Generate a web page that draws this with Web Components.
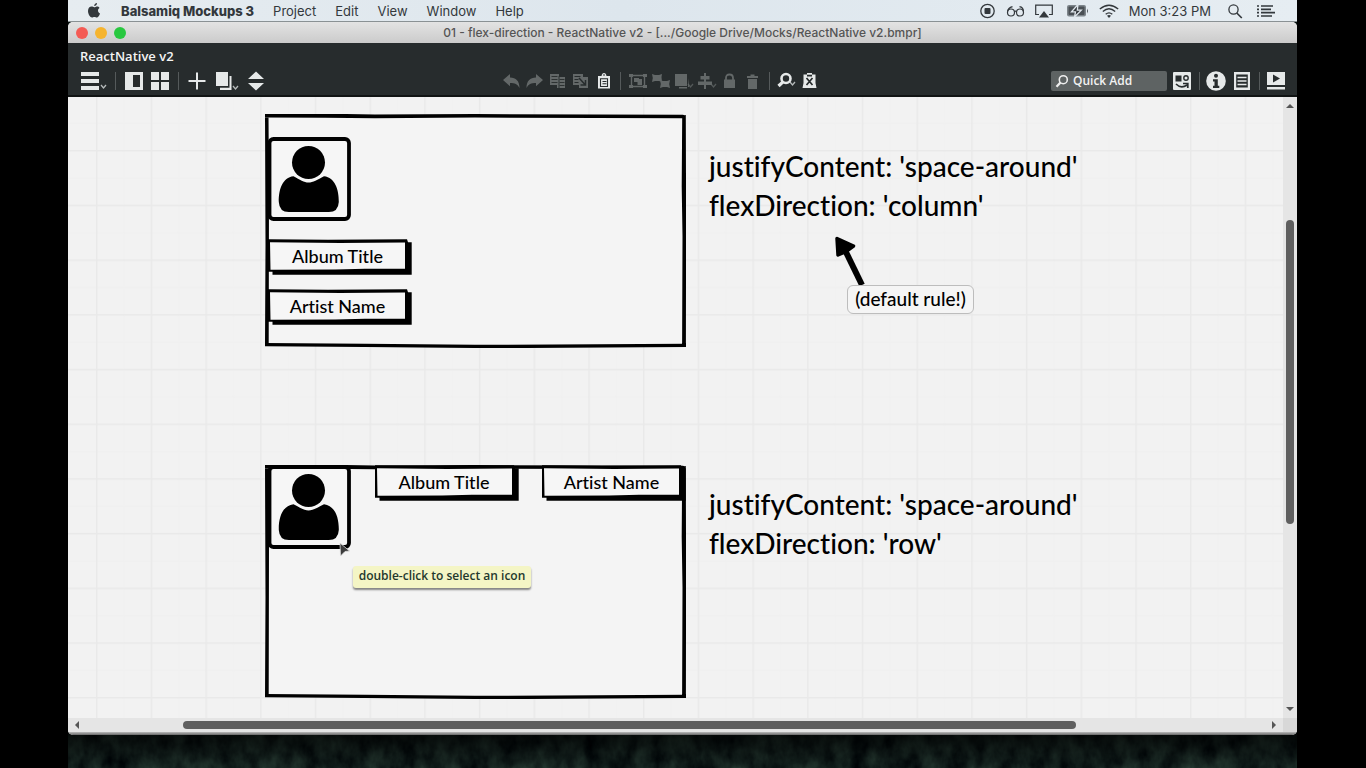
<!DOCTYPE html>
<html lang="en">
<head>
<meta charset="utf-8">
<title>Balsamiq Mockups 3</title>
<style>
html, body { height: 100%; margin: 0; background: #000; }
body { font-family: Inter, "Liberation Sans", sans-serif; }
</style>
</head>
<body>
<mac-desktop>
  <mac-menubar slot="menubar"></mac-menubar>
  <mac-window heading="01 - flex-direction - ReactNative v2 - [.../Google Drive/Mocks/ReactNative v2.bmpr]">
    <mockup-toolbar slot="toolbar" project="ReactNative v2"></mockup-toolbar>
    <mockup-canvas>
      <sketch-frame direction="column" style="left:197px;top:17px">
        <sketch-avatar></sketch-avatar>
        <sketch-button>Album Title</sketch-button>
        <sketch-button>Artist Name</sketch-button>
      </sketch-frame>
      <sketch-text style="left:641px;top:50px">justifyContent: 'space-around'<br>flexDirection: 'column'</sketch-text>
      <sketch-arrow style="left:764px;top:137px"></sketch-arrow>
      <sketch-note style="left:779px;top:188px">(default rule!)</sketch-note>
      <sketch-frame direction="row" style="left:197px;top:368px">
        <sketch-avatar></sketch-avatar>
        <sketch-button>Album Title</sketch-button>
        <sketch-button>Artist Name</sketch-button>
      </sketch-frame>
      <sketch-text style="left:641px;top:388px">justifyContent: 'space-around'<br>flexDirection: 'row'</sketch-text>
      <mockup-tooltip style="left:285px;top:469px">double-click to select an icon</mockup-tooltip>
      <mockup-cursor style="left:271px;top:446px"></mockup-cursor>
    </mockup-canvas>
  </mac-window>
</mac-desktop>

<script>
const define = (name, html, setup) => {
  const template = document.createElement('template');
  template.innerHTML = html;
  customElements.define(name, class extends HTMLElement {
    connectedCallback() {
      if (this.shadowRoot) return;
      this.attachShadow({ mode: 'open' }).append(template.content.cloneNode(true));
      if (setup) setup(this, this.shadowRoot);
    }
  });
};

const chevron = (x, y) => `<path d="M${x} ${y}l2.5 3 2.5-3" fill="none" stroke="currentColor" stroke-width="1.3" opacity=".75"/>`;
const bg = '#272c2d';
const icons = {
  apple: [16, 16, `<path fill="currentColor" d="M11 0c.1 1.600-1.300 3.100-2.800 3.100C8 1.600 9.500.1 11 0zM13.500 4.900c-1 .6-1.600 1.500-1.500 2.700 0 1.400.8 2.400 2 2.900-.6 1.900-1.900 4-3.200 4-.9 0-1.300-.6-2.400-.6s-1.500.6-2.400.6C4.200 14.500 2 11 2 8c0-2.900 1.800-4.400 3.500-4.400 1.100 0 2 .7 2.800.7.700 0 1.700-.8 3-.8.7 0 1.700.4 2.200 1.400z"/>`],
  record: [16, 16, `<circle cx="7.500" cy="8" r="6.700" fill="none" stroke="currentColor" stroke-width="1.300"/><rect x="4.500" y="5" width="6" height="6" rx="1" fill="currentColor"/>`],
  glasses: [19, 16, `<g fill="none" stroke="currentColor" stroke-width="1.200"><circle cx="5" cy="9.500" r="3.500"/><circle cx="14" cy="9.500" r="3.500"/><path d="M8.400 8.500q1.100-.8 2.200 0M1.600 8.500C2 5 4 4.300 6.500 3.600M17.400 8.500c0-3-1.400-4.500-3.900-4.900"/></g>`],
  airplay: [20, 16, `<path d="M4 11.500H.7V2.200h16.600v9.300H14" fill="none" stroke="currentColor" stroke-width="1.200"/><path d="M9 8l5 6.500H4z" fill="currentColor"/>`],
  battery: [24, 16, `<rect x="2" y="2" width="19" height="11.500" rx="2" fill="#7d858b"/><rect x="3.500" y="3.500" width="16" height="8.500" rx="1" fill="#4a5055"/><path d="M22 5.500v5q1.800-2.500 0-5z" fill="currentColor"/><path d="M13 1.500L6.500 8.800h4L9.500 14l6.800-6.900h-4z" fill="currentColor" stroke="#dfe6ec" stroke-width="1.300"/>`],
  wifi: [20, 16, `<g fill="none" stroke="currentColor" stroke-width="1.300"><path d="M.8 6Q10-1.500 19.200 6M3.800 8.500Q10 3 16.200 8.500M6.700 11.200q3.300-2.800 6.600 0"/></g><path d="M10 15l-2-2.300q2-1.500 4 0z" fill="currentColor"/>`],
  spotlight: [24, 16, `<circle cx="12.500" cy="6.500" r="4.600" fill="none" stroke="currentColor" stroke-width="1.300"/><path d="M15.800 10l5 5" stroke="currentColor" stroke-width="1.700"/>`],
  list: [20, 16, `<path d="M6 3h12M6 6.300h10M6 9.600h14M6 13h11" stroke="currentColor" stroke-width="1.700"/><path d="M2 3h2M2 6.300h2M2 9.600h2M2 13h2" stroke="currentColor" stroke-width="1.700"/>`],
  menu: [28, 20, `<path d="M0 1h18v4H0zM0 8h18v4H0zM0 15h18v4H0z" fill="currentColor"/>${chevron(20, 14)}`],
  panel: [20, 20, `<path d="M1 1h18v18H1z" fill="currentColor"/><path d="M9 4h7v12H9z" fill="${bg}"/>`],
  tiles: [20, 20, `<path d="M1 1h8v8H1zM11 1h8v8h-8zM1 11h8v8H1zM11 11h8v8h-8z" fill="currentColor"/>`],
  plus: [20, 20, `<path d="M1.500 10h17M10 1.500v17" stroke="currentColor" stroke-width="2"/>`],
  pages: [28, 20, `<path d="M5 1h12v14H5zM18.500 5h2v14H9v-2.200h9.500z" fill="currentColor"/>${chevron(22, 15)}`],
  sort: [20, 20, `<path d="M11 .5l8 7.500H3zM11 19.500L3 12h16z" fill="currentColor"/>`],
  undo: [18, 18, `<path d="M0 8l7-6v3.500c6 0 9.500 3.500 9.500 10.500-2-4-4.500-5-9.500-5v3.200z" fill="currentColor"/>`],
  redo: [18, 18, `<path d="M17 8l-7-6v3.500C4 5.500.5 9 .5 16c2-4 4.500-5 9.500-5v3.200z" fill="currentColor"/>`],
  copy: [18, 18, `<path d="M1 2h9v11H1zM9 5h7v11H8v-3h1z" fill="currentColor"/><path d="M2.500 4.500h6M2.500 7.500h6M2.500 10.500h6M10.500 7.500h5M10.500 10.500h5M10.500 13.500h5M10 4v12" stroke="${bg}" stroke-width=".9"/>`],
  duplicate: [18, 18, `<path d="M1 2h10v3h5v11H7v-3H1z" fill="currentColor"/><path d="M2.500 4.500h6M2.500 7.500h4M2.500 10.500h4" stroke="${bg}"/><path d="M7 6l6 6.500M13.500 8v5H8.500" stroke="${bg}" stroke-width="1.500" fill="none"/>`],
  paste: [18, 18, `<path d="M3 4h3.500q.5-3 2.500-3t2.500 3H15v12.500H3z" fill="currentColor"/><path d="M5.500 6.800h7v7.700h-7z" fill="none" stroke="${bg}" stroke-width="1.100"/><path d="M8 3h2M7.500 9.500h4M7.500 11.800h4" stroke="${bg}" stroke-width="1.100"/>`],
  group: [18, 18, `<path d="M2.500 3.500h13v11h-13z" fill="none" stroke="currentColor" stroke-width="1.400"/><path d="M0 2h4v3H0zM14 2h4v3h-4zM0 13h4v3H0zM14 13h4v3h-4zM5 6h5v4H5zM8.500 7H13v6H8.500z" fill="currentColor"/>`],
  ungroup: [18, 18, `<path d="M0 2l3 1h4l3-1-.5 3 .5 5-3-1H3l-3 1 .8-4zM8 8l3 1h4l3-1-.8 4 .8 4-3-1h-4l-3 1 .8-4z" fill="currentColor"/>`],
  layer: [20, 18, `<path d="M1 2h12v12H1zM14 6v9H5v1.500h8v-1.500h2z" fill="currentColor"/>${chevron(14, 12)}`],
  align: [20, 18, `<path d="M8 1v16" stroke="currentColor" stroke-width="2"/><path d="M3.500 4h9v3.500h-9zM1 9.500h14V13H1z" fill="currentColor"/>${chevron(14, 12)}`],
  lock: [18, 18, `<path d="M3 7.500h11V16H3z" fill="currentColor"/><path d="M5 9V6q0-3.500 3.500-3.500T12 6v3" fill="none" stroke="currentColor" stroke-width="1.800"/>`],
  trash: [18, 18, `<path d="M3 4h3.500V2.500h4V4H14v2H3zM4 7h9v10H4z" fill="currentColor"/>`],
  zoom: [20, 18, `<circle cx="9" cy="6.500" r="4.500" fill="none" stroke="currentColor" stroke-width="2.600"/><path d="M6 9.800L1.500 14" stroke="currentColor" stroke-width="3.200"/>${chevron(13, 10)}`],
  clipx: [18, 18, `<path d="M2.500 2.500H6V1h5v1.500h3.500V11l1 5H1.500l1-5z" fill="currentColor"/><path d="M5.500 6l6 7M11.500 6l-6 7M6 3.600h5" stroke="${bg}" stroke-width="1.700"/>`],
  finder: [14, 14, `<circle cx="8.300" cy="5.700" r="4" fill="none" stroke="currentColor" stroke-width="1.600"/><path d="M5.500 8.500L1.500 12.800" stroke="currentColor" stroke-width="2.200"/>`],
  swap: [20, 20, `<rect x="1" y="1" width="18" height="18" rx="1" fill="currentColor"/><path d="M3.500 4.500h6v6h-6z" fill="${bg}"/><circle cx="14" cy="7" r="2.200" fill="none" stroke="${bg}" stroke-width="1.400"/><path d="M4 13q5 5 11 1M15.800 17v-4.500H11" fill="none" stroke="${bg}" stroke-width="1.700"/>`],
  info: [20, 20, `<circle cx="10" cy="10" r="9.800" fill="currentColor"/><circle cx="10" cy="4.800" r="2" fill="${bg}"/><path d="M7 8.300h4.800v6.500h1.500V17H7v-2.200h1.500v-4.300H7z" fill="${bg}"/>`],
  notes: [20, 20, `<path d="M2 1h16v18H2z" fill="currentColor"/><path d="M4.200 3.500h11.600v13H4.200z" fill="${bg}"/><path d="M5.500 6.500h9M5.500 10h9M5.500 13.500h9" stroke="currentColor" stroke-width="1.500"/>`],
  play: [20, 20, `<path d="M1 1h18v13H1zM1 16h18v2.500H1z" fill="currentColor"/><path d="M7 3.500l7 4-7 4z" fill="${bg}"/>`]
};

define('app-icon', `<style>:host{display:block;flex:none}svg{display:block}</style>`, (el, root) => {
  const [w, h, body] = icons[el.getAttribute('name')];
  root.innerHTML += `<svg width="${w}" height="${h}" viewBox="0 0 ${w} ${h}" aria-hidden="true">${body}</svg>`;
});

define('mac-desktop', `<style>
:host{display:flex;flex-direction:column;height:100vh;margin:0 69px 0 68px;position:relative;overflow:hidden;background:#0b1513}
.wallpaper{display:block;position:absolute;left:0;bottom:0;width:100%;height:64px}
::slotted(mac-window){flex:1;min-height:0;margin-bottom:33px}
</style>
<svg class="wallpaper" aria-hidden="true">
<defs>
<filter id="forest" x="0" y="0" width="100%" height="100%" color-interpolation-filters="sRGB"><feTurbulence type="fractalNoise" baseFrequency=".06 .04" numOctaves="4" seed="8"/><feColorMatrix values="0 .22 0 0 -.04  0 .3 0 0 -.03  0 .24 0 0 -.01  0 0 0 0 1"/></filter>
<linearGradient id="shade" x2="0" y2="1"><stop offset=".45" stop-color="#000" stop-opacity=".7"/><stop offset="1" stop-color="#000" stop-opacity="0"/></linearGradient>
</defs>
<rect width="100%" height="100%" filter="url(#forest)"/><rect width="100%" height="100%" fill="url(#shade)"/>
</svg>
<slot name="menubar"></slot><slot></slot>`);

define('mac-menubar', `<style>
:host{display:flex;justify-content:space-between;align-items:center;height:22px;flex:none;position:relative;box-sizing:border-box;padding:0 22px 0 18px;background:linear-gradient(90deg,#e6ecf0,#dde6ed 45%,#e6edf2);border-bottom:1px solid #8a9194;color:#33383c;font-size:13px;line-height:20px}
nav,.status{display:flex;align-items:center}
nav{gap:19px}.status{gap:10px}
a{color:inherit;text-decoration:none;white-space:nowrap}
.app{font-weight:800}
</style>
<nav aria-label="Application"><app-icon name="apple"></app-icon><a class="app" href="#app">Balsamiq Mockups 3</a><a href="#project">Project</a><a href="#edit">Edit</a><a href="#view">View</a><a href="#window">Window</a><a href="#help">Help</a></nav>
<div class="status"><app-icon name="record"></app-icon><app-icon name="glasses"></app-icon><app-icon name="airplay"></app-icon><app-icon name="battery"></app-icon><app-icon name="wifi"></app-icon><a href="#clock">Mon 3:23 PM</a><app-icon name="spotlight"></app-icon><app-icon name="list"></app-icon></div>`);

define('mac-window', `<style>
:host{display:flex;flex-direction:column;position:relative;border-radius:5px;overflow:hidden;background:#e8e8e8}
header{display:grid;grid-template-columns:1fr auto 1fr;align-items:center;height:21px;flex:none;padding:0 8px;background:linear-gradient(#e3e3e3,#cbcbcb);color:#555;font-size:12px;font-weight:500}
.lights{display:flex;gap:7px}
.lights button{width:12px;height:12px;border:0;border-radius:6px;padding:0}
.close{background:#f45b54}.min{background:#f6b42e}.max{background:#28c840}
h1{margin:0;font:inherit;white-space:nowrap}
.view{flex:1;min-height:0;display:grid;grid-template:minmax(0,1fr) 14px / minmax(0,1fr) 14px}
.corner{background:#d8d8d8}
.edge{height:3px;flex:none;background:linear-gradient(#bbb,#666)}
</style>
<header><div class="lights"><button class="close" aria-label="Close"></button><button class="min" aria-label="Minimize"></button><button class="max" aria-label="Zoom"></button></div><h1></h1></header>
<slot name="toolbar"></slot>
<div class="view"><slot></slot><scroll-bar class="v" style="--before:109;--thumb:303;--after:180"></scroll-bar><scroll-bar horizontal style="--before:102;--thumb:891;--after:194"></scroll-bar><div class="corner"></div></div>
<div class="edge"></div>`, (el, root) => { root.querySelector('h1').textContent = el.getAttribute('heading'); });

define('scroll-bar', `<style>
:host{display:flex;flex-direction:column;align-items:center;padding:5px 0;box-sizing:border-box;background:#e5e5e5;min-width:0;min-height:0}
:host([horizontal]){flex-direction:row;padding:0 5px}
svg{display:block;width:8px;height:8px;flex:none;fill:#555}
.first{transform:rotate(180deg)}
:host([horizontal]) .first{transform:rotate(90deg)}
:host([horizontal]) .last{transform:rotate(-90deg)}
.before{flex:var(--before)}.after{flex:var(--after)}
.thumb{flex:var(--thumb);width:8px;border-radius:4px;background:#5f5f5f}
:host([horizontal]) .thumb{width:auto;height:8px}
</style>
<svg class="first" viewBox="0 0 8 8"><path d="M0 2h8L4 6z"/></svg><div class="before"></div><div class="thumb"></div><div class="after"></div><svg class="last" viewBox="0 0 8 8"><path d="M0 2h8L4 6z"/></svg>`);

define('tool-button', `<style>
:host{display:block;flex:none;width:var(--tool-width,23px)}
button{display:flex;justify-content:center;align-items:center;width:100%;height:24px;padding:0;border:0;background:none;color:#e6e9e9}
button:disabled{color:#636868}
</style><button></button>`, (el, root) => {
  const b = root.querySelector('button'), icon = document.createElement('app-icon');
  b.disabled = el.hasAttribute('off');
  b.setAttribute('aria-label', el.getAttribute('icon'));
  icon.setAttribute('name', el.getAttribute('icon'));
  b.append(icon);
});

define('quick-add', `<style>
:host{display:block;margin-right:2px}
label{display:flex;align-items:center;gap:4px;width:116px;height:20px;box-sizing:border-box;padding:0 4px;border-radius:2px;background:#5e6363;color:#eee}
input{flex:1;min-width:0;border:0;padding:0;background:none;outline:0;color:#fff;font:600 12px/20px "Open Sans","Noto Sans",sans-serif}
input::placeholder{color:#f2f2f2;opacity:1}
</style><label><app-icon name="finder"></app-icon><input type="text" placeholder="Quick Add" aria-label="Quick Add"></label>`);

define('mockup-toolbar', `<style>
:host{display:flex;flex-direction:column;flex:none;height:54px;box-sizing:border-box;padding:4px 8px 0 12px;background:#272c2d;border-bottom:2px solid #111414;color:#f4f4f4}
h2{margin:0;font:600 13px/18px "Open Sans","Noto Sans",sans-serif}
.row{display:flex;justify-content:space-between;align-items:center;height:30px;padding-top:2px}
.row>div{display:flex;align-items:center}
.left,.right{--tool-width:26px}
.wide{--tool-width:30px}
i{width:11px;height:18px;flex:none;background:linear-gradient(#555a5b,#555a5b) center/1px 100% no-repeat}
.right i{width:8px}
</style>
<h2></h2>
<div class="row">
<div class="left"><tool-button class="wide" icon="menu"></tool-button><i></i><tool-button icon="panel"></tool-button><tool-button icon="tiles"></tool-button><i></i><tool-button icon="plus"></tool-button><tool-button class="wide" icon="pages"></tool-button><tool-button class="wide" icon="sort"></tool-button></div>
<div><tool-button off icon="undo"></tool-button><tool-button off icon="redo"></tool-button><tool-button off icon="copy"></tool-button><tool-button off icon="duplicate"></tool-button><tool-button icon="paste"></tool-button><i></i><tool-button off icon="group"></tool-button><tool-button off icon="ungroup"></tool-button><tool-button off icon="layer"></tool-button><tool-button off icon="align"></tool-button><tool-button off icon="lock"></tool-button><tool-button off icon="trash"></tool-button><i></i><tool-button icon="zoom"></tool-button><tool-button icon="clipx"></tool-button></div>
<div class="right"><quick-add></quick-add><tool-button icon="swap"></tool-button><i></i><tool-button icon="info"></tool-button><tool-button icon="notes"></tool-button><i></i><tool-button icon="play"></tool-button></div>
</div>`, (el, root) => { root.querySelector('h2').textContent = el.getAttribute('project'); });

define('mockup-canvas', `<style>
:host{display:block;position:relative;overflow:hidden;background:#f2f2f2;color:#000;font-family:Lato,sans-serif;font-weight:500;font-variant-ligatures:none;min-width:0}
.grid{position:absolute;inset:0;width:100%;height:100%}
::slotted(*){position:absolute}
</style>
<svg class="grid" aria-hidden="true"><defs><pattern id="g" width="54.700" height="54.700" patternUnits="userSpaceOnUse" x="28" y="53"><path d="M28 0v54.700M0 28h54.700" stroke="#f0f0f0"/><path d="M.75 0v54.700M0 .75h54.700" stroke="#e9e9e9" stroke-width="1.500"/></pattern></defs><rect width="100%" height="100%" fill="url(#g)"/></svg>
<slot></slot>`);

define('sketch-frame', `<style>
:host{display:block;width:421px;height:234px;box-sizing:border-box}
svg{position:absolute;left:0;top:0}
.items{position:relative;display:flex;height:100%;box-sizing:border-box;padding:23px 0 0 3px;flex-direction:column;align-items:flex-start;gap:14px;--below:4px}
:host([direction=row]) .items{flex-direction:row;padding-top:0;gap:0;justify-content:space-between;--below:0}
</style>
<svg width="421" height="234" viewBox="0 0 421 234" aria-hidden="true"><path d="M2 2L120 1.500 419 2 418 231 210 231.500 2 230.500z" fill="#f4f4f4"/><path d="M0 0l75-.1 35 .6 100-.5 208 .8 2.500 1-.1 2.400-210.400-.6-100 .6-50-.5L0 3.500zM417.200 1.500l3.600-.5.3 100-.2 131-3.800.3.4-110-.8-50zM0 .5h3.500L4 80l-.3 151.500H0l.5-100zM0 229l100 .8 110 1 211-1v3.200l-190 1.200L100 233 0 232.300z"/></svg>
<div class="items"><slot></slot></div>`);

define('sketch-avatar', `<style>:host{display:block;width:83px;height:84px;margin-bottom:var(--below,0)}svg{display:block}</style>
<svg width="83" height="84" viewBox="0 0 83 84" role="img" aria-label="Person"><rect x="1.500" y="2" width="79.500" height="80" rx="4" fill="#f6f6f6" stroke="#000" stroke-width="3.800"/><circle cx="40.500" cy="25.500" r="16.500"/><path d="M25.500 39.200C32 42.500 36 45.500 40.500 45.500s9-3 15.500-6.300C67 40.500 71 52.500 70.800 65q-.5 10-10 10h-40q-9.500 0-10-10C10.500 52.500 14.500 40.500 25.500 39.200z"/></svg>`);

define('sketch-button', `<style>
:host{display:block}
button{display:block;position:relative;width:144px;height:36px;padding:0 5px 2px 0;border:0;background:none;color:#000;font:500 18px/34px Lato,sans-serif;font-variant-ligatures:none;text-align:center}
svg{position:absolute;left:0;top:0}
span{position:relative}
</style>
<button><svg width="144" height="36" viewBox="0 0 144 36" aria-hidden="true"><path d="M-1 .3l61 .4 79-.5 1 3h3.700v32.500H4.500v-3H-1z"/><path d="M2 3.300l70 .6 65-.4v26.200l-40 .1-30 .8-64.500.1z" fill="#f6f6f6"/></svg><span><slot></slot></span></button>`);

define('sketch-text', `<style>:host{display:block;font-size:28px;line-height:39px;white-space:nowrap}</style><slot></slot>`);

define('sketch-note', `<style>:host{display:block;box-sizing:border-box;width:127px;height:29px;border:1px solid #bdbdbd;border-radius:6px;background:#f5f5f5;font-size:19px;line-height:25px;text-align:center;white-space:nowrap}</style><slot></slot>`);

define('sketch-arrow', `<style>:host{display:block}svg{display:block}</style>
<svg width="36" height="54" viewBox="0 0 36 54" aria-hidden="true"><path d="M12 14l18 37" stroke="#000" stroke-width="6"/><path d="M5 4.500L21.500 12 14 17.500 6 21z" stroke="#000" stroke-width="3.500" stroke-linejoin="round"/></svg>`);

define('mockup-tooltip', `<style>:host{display:block;box-sizing:border-box;width:178px;height:22px;border-radius:3px;background:#f4f5c5;box-shadow:0 2px 2px #0007;color:#23382d;font:600 12px/20px "Open Sans","Noto Sans",sans-serif;text-align:center;white-space:nowrap}</style><slot></slot>`);

define('mockup-cursor', `<style>:host{display:block}svg{display:block}</style><svg width="12" height="14" viewBox="0 0 12 14" aria-hidden="true"><path d="M1 0l9.500 8-4.500.5L1.500 13z" fill="#3c3c3c" stroke="#ddd" stroke-width=".8"/></svg>`);
</script>
</body>
</html>
